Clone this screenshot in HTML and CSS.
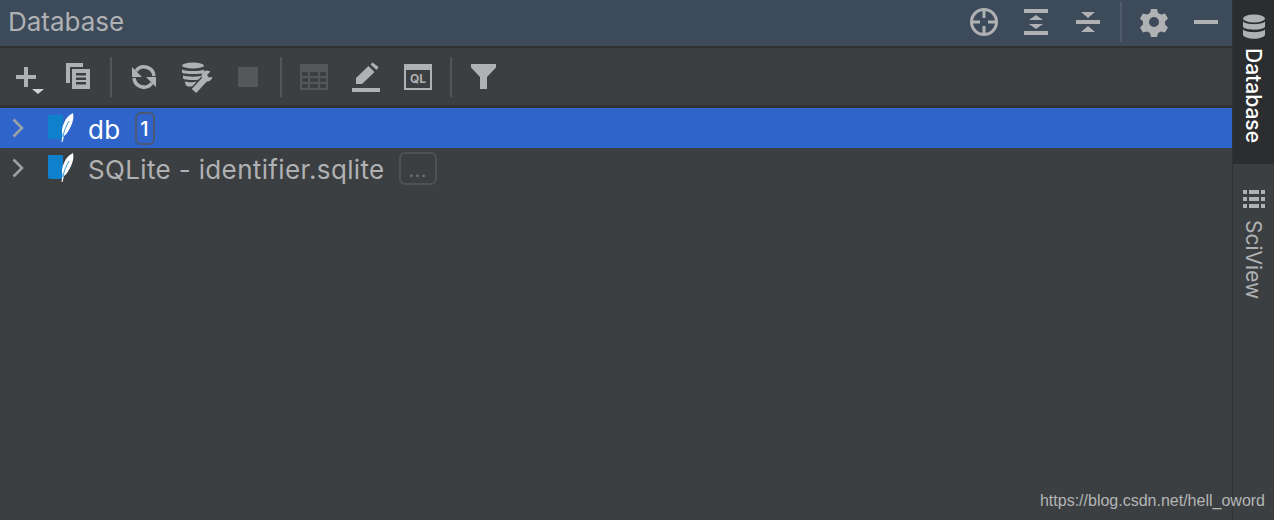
FILE: index.html
```html
<!DOCTYPE html>
<html lang="en">
<head>
<meta charset="utf-8">
<title>Database</title>
<link rel="stylesheet" href="styles.css">
</head>
<body>
<div class="window">
  <main class="panel">
    <header class="titlebar">
      <h1 class="title">Database</h1>
      <div class="actions">
        <span class="btn"><svg width="32" height="32" viewBox="0 0 32 32"><g fill="none" stroke="#afb1b3" stroke-width="3"><circle cx="16" cy="16" r="12.500"/><path d="M16 3v9M16 20v9M3 16h9M20 16h9"/></g></svg></span>
        <span class="btn"><svg width="32" height="32" viewBox="0 0 32 32" fill="#afb1b3"><path d="M4 3h24v4H4zM4 25h24v4H4zM16 9l7 5H9zM16 23l-7-5h14z"/></svg></span>
        <span class="btn"><svg width="32" height="32" viewBox="0 0 32 32" fill="#afb1b3"><path d="M4 14h24v4H4zM9 6h14l-7 6zM16 20l7 6H9z"/></svg></span>
        <span class="sep"></span>
        <span class="btn"><svg width="32" height="32" viewBox="0 0 32 32"><path fill="#afb1b3" fill-rule="evenodd" d="M13 3h6l1 4 3 1.500 4-1 3 5-3 3v3l3 3-3 5-4-1-3 1.500-1 4h-6l-1-4-3-1.500-4 1-3-5 3-3v-3l-3-3 3-5 4 1 3-1.500zM16 11a5 5 0 1 0 0 10 5 5 0 0 0 0-10z"/></svg></span>
        <span class="btn"><svg width="32" height="32" viewBox="0 0 32 32" fill="#afb1b3"><path d="M4 14h24v4H4z"/></svg></span>
      </div>
    </header>
    <nav class="toolbar">
      <span class="btn"><svg width="36" height="44" viewBox="0 0 36 44" fill="#afb1b3"><path d="M16 12h4v8h8v4h-8v8h-4v-8H8v-4h8z"/><path d="M24 34h12l-6 5z" fill="#d0d2d3"/></svg></span>
      <span class="btn"><svg width="32" height="32" viewBox="0 0 32 32"><path fill="#afb1b3" d="M4 2h17v4H8v16H4zM10 8h18v20H10z"/><path fill="#3c3f41" d="M14 12h10v2.500H14zM14 16.500h10V19H14zM14 21h10v2.500H14z"/></svg></span>
      <span class="sep"></span>
      <span class="btn"><svg width="32" height="32" viewBox="0 0 32 32"><g fill="none" stroke="#afb1b3" stroke-width="3.500"><path d="M8 10a10 10 0 0 1 18 5"/><path d="M24 22a10 10 0 0 1-18-5"/></g><path fill="#afb1b3" d="M4 6v10h10zM28 26V16H18z"/></svg></span>
      <span class="btn"><svg width="34" height="34" viewBox="0 0 34 34"><ellipse cx="14" cy="5.500" rx="11" ry="3" fill="#afb1b3"/><path fill="#afb1b3" d="M3 9.500c4 2 18 2 22 0v3c-1 2-21 2-22 0zM4 15.500c4 1.500 16 1.500 20 0v3c-2 2-18 2-20 0zM6 21.500c3 1 9 1 12 0l-4 5H9c-2 0-3-3-3-5z"/><path stroke="#3c3f41" stroke-width="10" d="M14 33 28 18"/><path stroke="#afb1b3" stroke-width="6" d="M15 31 27 18"/><circle cx="28" cy="16" r="5.500" fill="#afb1b3"/><path fill="#3c3f41" d="M28 15 33 10h2v6.500l-5 1z"/></svg></span>
      <span class="btn"><span class="stop"></span></span>
      <span class="sep"></span>
      <span class="btn"><svg width="28" height="26" viewBox="0 0 28 26"><path fill="#55585a" fill-rule="evenodd" d="M0 0h28v26H0zM2 8v4h6V8zM10 8v4h8V8zM20 8v4h6V8zM2 14v4h6v-4zM10 14v4h8v-4zM20 14v4h6v-4zM2 20v4h6v-4zM10 20v4h8v-4zM20 20v4h6v-4z"/></svg></span>
      <span class="btn"><svg width="30" height="30" viewBox="0 0 30 30" fill="#afb1b3"><path d="M1 26h28v4H1zM5 22v-6L17.500 4l6 6L11 22zM19.500 2.500l2-2 6 4.500-2 3z"/></svg></span>
      <span class="btn"><span class="ql">QL</span></span>
      <span class="sep"></span>
      <span class="btn"><svg width="26" height="26" viewBox="0 0 26 26" fill="#afb1b3"><path d="M0 0h25v3.500L16 13v12H9V13L0 3.500z"/></svg></span>
    </nav>
    <section class="tree">
      <div class="row selected">
        <svg class="chevron" width="12" height="20" viewBox="0 0 12 20" fill="none" stroke="#9ea1a3" stroke-width="2.500"><path d="M1.500 1.500 10 10l-8.500 8.500"/></svg>
        <svg class="dbicon" width="28" height="30" viewBox="0 0 28 30"><path fill="#0f80cc" d="M0 2h15v24H2a2 2 0 0 1-2-2z"/><path fill="#fff" d="M25 0c1 4 0 9-2 13-2 4-4 8-7 10l-1.500 6-1 0 1-7c-1.500-5 .5-11 3.500-16C20 3 23 1 25 0z"/><path fill="none" stroke="#0f80cc" stroke-width=".8" d="M15 24c1-6 3-11 6-16"/></svg>
        <span class="name">db</span>
        <span class="badge">1</span>
      </div>
      <div class="row">
        <svg class="chevron" width="12" height="20" viewBox="0 0 12 20" fill="none" stroke="#9ea1a3" stroke-width="2.500"><path d="M1.500 1.500 10 10l-8.500 8.500"/></svg>
        <svg class="dbicon" width="28" height="30" viewBox="0 0 28 30"><path fill="#0f80cc" d="M0 2h15v24H2a2 2 0 0 1-2-2z"/><path fill="#fff" d="M25 0c1 4 0 9-2 13-2 4-4 8-7 10l-1.500 6-1 0 1-7c-1.500-5 .5-11 3.500-16C20 3 23 1 25 0z"/><path fill="none" stroke="#0f80cc" stroke-width=".8" d="M15 24c1-6 3-11 6-16"/></svg>
        <span class="name">SQLite - identifier.sqlite</span>
        <span class="more">...</span>
      </div>
    </section>
  </main>
  <aside class="sidebar">
    <div class="tab active">
      <svg width="24" height="26" viewBox="0 0 24 26" fill="#afb1b3"><ellipse cx="12" cy="4.500" rx="11" ry="4"/><path d="M1 7.500c3 3.500 19 3.500 22 0V13c-3 3.500-19 3.500-22 0zM1 15.500c3 3.500 19 3.500 22 0V21c-3 5-19 5-22 0z"/></svg>
      <span class="tablabel">Database</span>
    </div>
    <div class="tab">
      <svg width="22" height="18" viewBox="0 0 22 18" fill="#afb1b3"><path d="M0 0h4v4H0zM6 0h10v4H6zM18 0h4v4h-4zM0 7h4v4H0zM6 7h10v4H6zM18 7h4v4h-4zM0 14h4v4H0zM6 14h10v4H6zM18 14h4v4h-4z"/></svg>
      <span class="tablabel">SciView</span>
    </div>
  </aside>
  <a class="watermark">https://blog.csdn.net/hell_oword</a>
</div>
</body>
</html>
```
FILE: styles.css
```css
* { box-sizing: border-box; }
html, body { margin: 0; height: 100%; overflow: hidden; }
body { background: #3c3f41; font-family: Inter, "Noto Sans", sans-serif; color: #afb1b3; }
.window { display: flex; width: 1274px; height: 520px; position: relative; }
.panel { width: 1232px; flex: none; display: flex; flex-direction: column; }
.titlebar { height: 48px; flex: none; display: flex; align-items: center; justify-content: space-between; background: #3d4a5a; border-bottom: 2px solid #323232; padding: 0 0 3px 8px; }
.title { margin: 0; font-size: 26px; font-weight: 400; color: #afb1b3; }
.actions, .toolbar { display: flex; align-items: center; }
.toolbar { height: 60px; flex: none; border-bottom: 3px solid #323232; }
.btn { width: 52px; height: 40px; flex: none; display: flex; align-items: center; justify-content: center; }
.sep { width: 2px; height: 40px; margin: 0 6px; background: #515658; flex: none; }
.titlebar .sep { background: #515c6b; }
.stop { width: 20px; height: 20px; background: #55585a; }
.ql { width: 28px; height: 26px; border: 2px solid #afb1b3; border-top-width: 6px; font-size: 12px; font-weight: 700; line-height: 17px; text-align: center; color: #afb1b3; }
.tree { flex: 1; }
.row { height: 40px; display: flex; align-items: center; padding-left: 12px; font-size: 26px; letter-spacing: .35px; color: #afb1b3; }
.row.selected { background: #2f65ca; color: #fff; }
.chevron { flex: none; margin-right: 24px; }
.dbicon { flex: none; margin-right: 12px; }
.name { white-space: nowrap; padding-top: 2px; }
.badge { margin-left: 14px; width: 20px; height: 33px; border: 2px solid #4a5872; border-radius: 6px; font-size: 20px; font-weight: 500; line-height: 31px; text-align: center; color: #fff; }
.more { margin-left: 14px; width: 38px; height: 33px; border: 2px solid #4f5254; border-radius: 6px; font-size: 20px; line-height: 32px; text-align: center; color: #6f7274; }
.sidebar { width: 42px; flex: none; border-left: 1px solid #323232; background: #3c3f41; display: flex; flex-direction: column; }
.tab { display: flex; flex-direction: column; align-items: center; gap: 8px; padding-top: 14px; color: #afb1b3; }
.tab.active { height: 164px; background: #2b2d2f; color: #fff; margin-bottom: 12px; }
.tab.active + .tab { padding-top: 14px; gap: 12px; }
.tablabel { writing-mode: vertical-rl; font-size: 21px; font-weight: 500; }
.tab.active + .tab .tablabel { font-weight: 400; }
.watermark { position: absolute; right: 9px; top: 492px; font-family: "Liberation Sans", Arial, sans-serif; font-size: 16px; color: #b3b5b6; }
```
